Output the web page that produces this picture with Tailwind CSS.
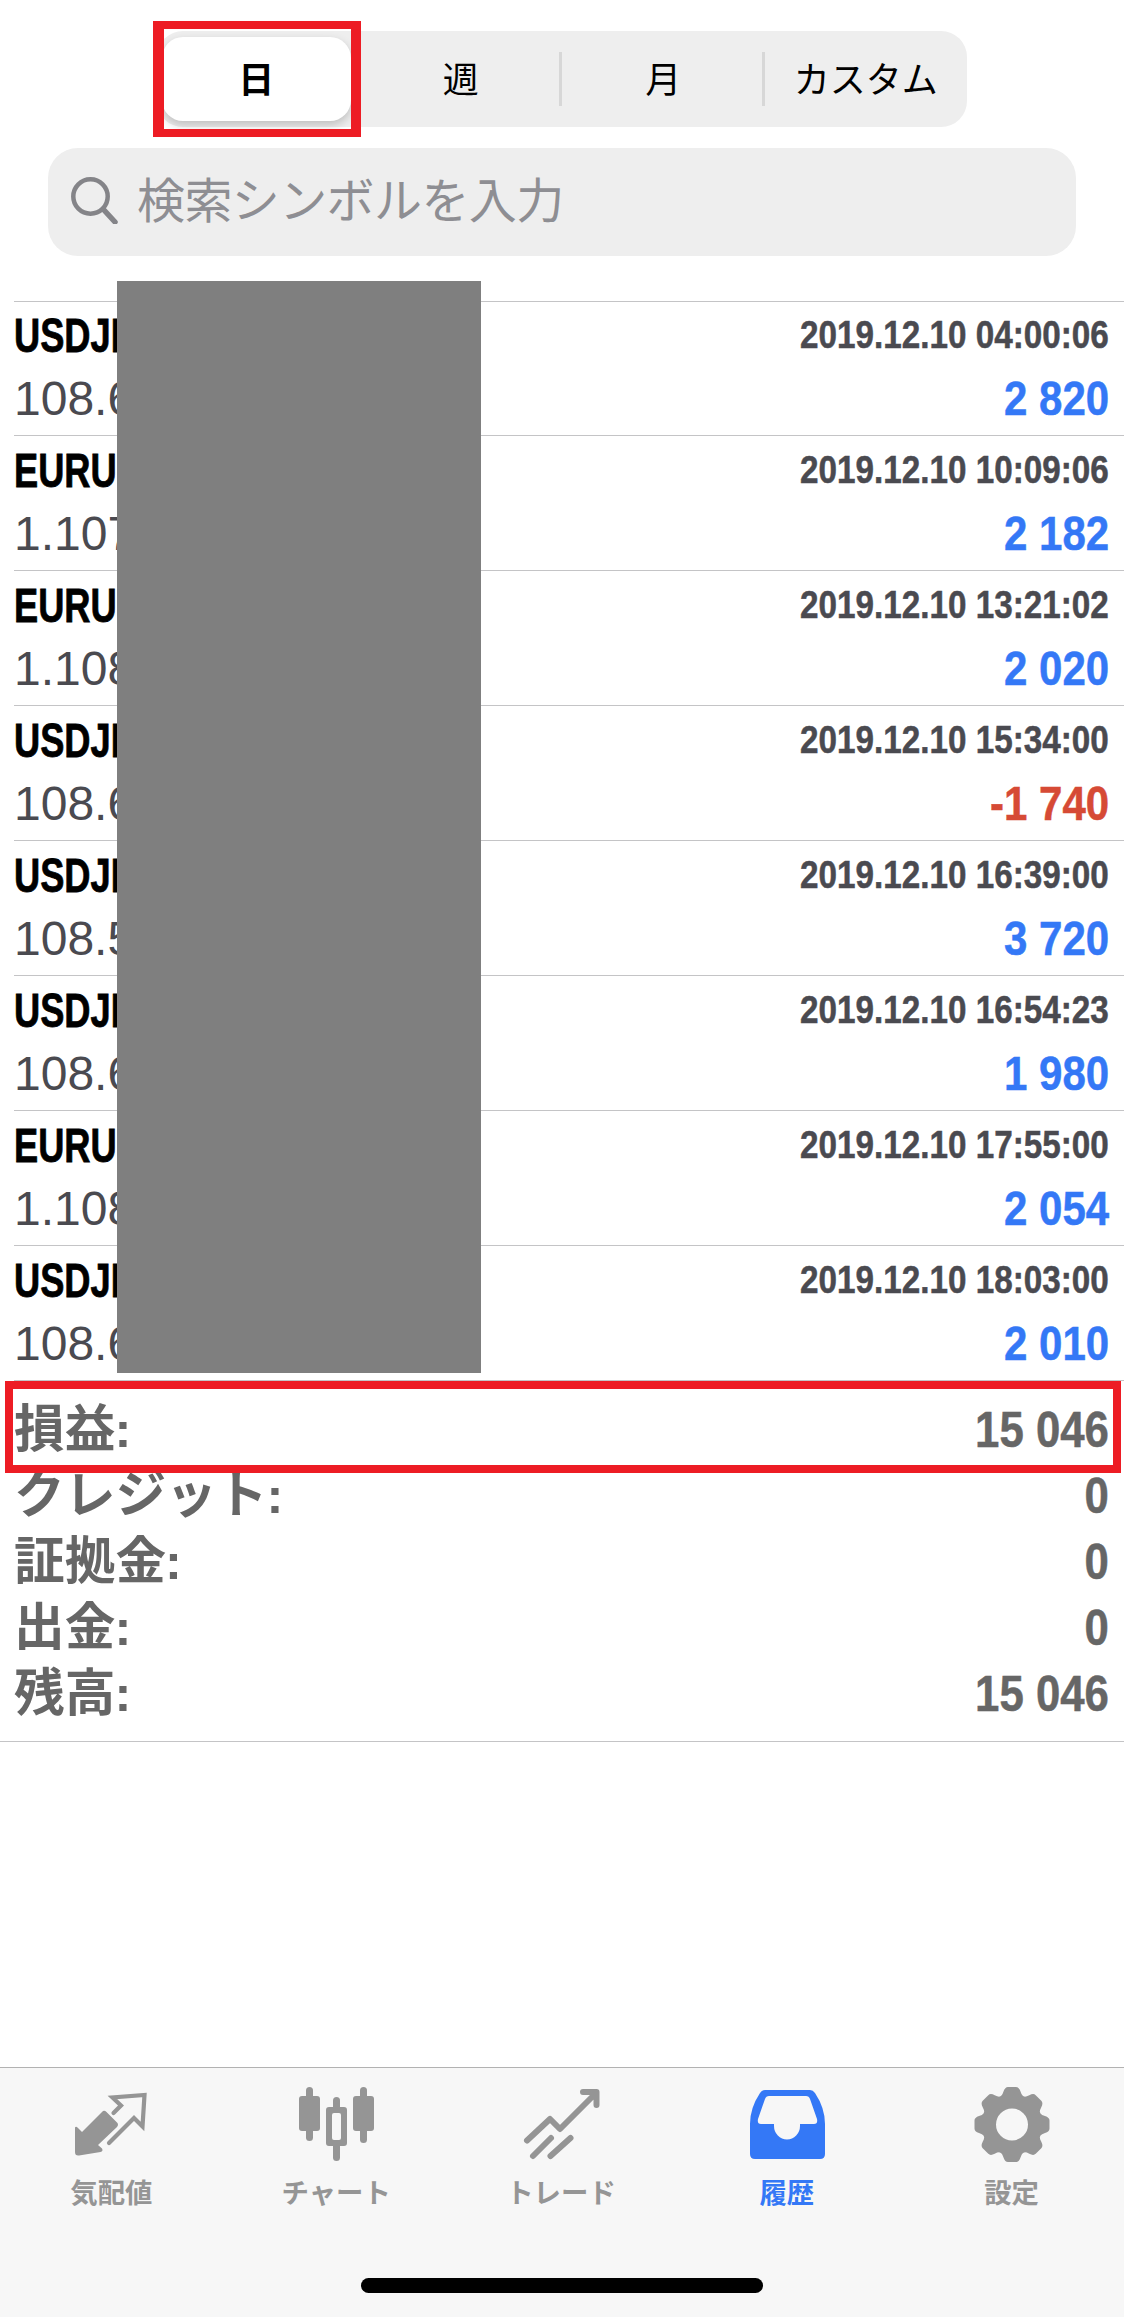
<!DOCTYPE html>
<html lang="ja"><head><meta charset="utf-8"><title>履歴</title>
<script src="https://cdn.jsdelivr.net/npm/@tailwindcss/browser@4"></script></head>
<body class="bg-white">
<div class="relative flex flex-col w-[1124px] h-[2317px] overflow-hidden bg-white font-['Liberation_Sans','Noto_Sans_CJK_JP',sans-serif]">
<div class="mt-[31px] mx-auto w-[810px] h-24 rounded-[26px] bg-[#eeeeee] grid grid-cols-4 items-center text-center text-[36px] leading-[50px] font-['Noto_Sans_CJK_JP',sans-serif] text-black shrink-0">
<div class="h-[84px] ml-[5px] mr-[9px] rounded-[21px] bg-white shadow-[0_4px_10px_rgba(0,0,0,0.2)] flex items-center justify-center font-bold"><span class="pb-[4px]">日</span></div>
<div class="h-[54px] pl-[3px] border-r-3 border-[#d7d7d7]">週</div>
<div class="h-[54px] pl-[3px] border-r-3 border-[#d7d7d7]">月</div>
<div class="h-[54px]">カスタム</div>
</div>
<div class="mt-[21px] mx-auto w-[1028px] h-[108px] rounded-[30px] bg-[#eeeeee] flex items-center shrink-0 pl-[22px]">
<svg class="w-12 h-12 mb-[4px]" viewBox="0 0 48 48" fill="none" stroke="#848488" stroke-linecap="round"><circle cx="20.500" cy="20.500" r="17.200" stroke-width="4.500"/><path d="M33.500 33.500L45 46" stroke-width="5.500"/></svg>
<span class="ml-[19px] text-[48px] leading-[60px] pb-[10px] text-[#8e8e93] font-['Noto_Sans_CJK_JP',sans-serif] font-normal -tracking-[0.6px]">検索シンボルを入力</span>
</div>
<main id="rows" class="mt-[45px] ml-[14px] border-t border-[#c4c4c6] shrink-0"></main>
<section id="totals" class="h-[361px] pt-[16px] border-b border-[#c4c4c6] pl-[14px] pr-[15px] shrink-0"></section>
<nav class="mt-auto h-[250px] border-t border-[#b2b2b2] bg-[#f7f7f7] flex flex-col items-center shrink-0">
<div class="grid grid-cols-5 w-full text-center text-[27.400px] leading-9 font-bold text-[#959595] font-['Noto_Sans_CJK_JP',sans-serif]">
<div class="flex flex-col items-center pt-[14px]"><svg class="w-20 h-20 mb-[11px]" viewBox="0 0 80 80" fill="currentColor"><path d="M3 45.500Q4 44 6 46L10 50L30 30Q32 27.500 34.500 30L45 40.500Q47 42.500 45 45L26 63L30 66.500Q31.500 69 28.500 70L7 73.500Q3 74 3 70Z"/><path d="M41.500 31L49 23.500L40.500 15.500L72.500 13L70.500 44.500L62 36L37 61" fill="none" stroke="currentColor" stroke-width="4.200" stroke-linecap="round"/></svg><span class="pr-[2px]">気配値</span></div>
<div class="flex flex-col items-center pt-[14px]"><svg class="w-20 h-20 mb-[11px]" viewBox="1 0 80 80" fill="currentColor"><rect x="3" y="14" width="21" height="35" rx="3"/><rect x="10" y="5" width="7" height="54" rx="3.500"/><rect x="57" y="14" width="21" height="35" rx="3"/><rect x="64" y="5" width="7" height="56" rx="3.500"/><rect x="37" y="15" width="7" height="16" rx="3.500"/><rect x="37" y="58" width="7" height="21" rx="3.500"/><path fill-rule="evenodd" d="M33 25H48Q51 25 51 28V61Q51 64 48 64H33Q30 64 30 61V28Q30 25 33 25ZM38 31Q36 31 36 33V56Q36 58 38 58H43Q45 58 45 56V33Q45 31 43 31Z"/></svg><span class="pr-[2px]">チャート</span></div>
<div class="flex flex-col items-center pt-[14px]"><svg class="w-20 h-20 mb-[11px]" viewBox="0 0 80 80" fill="none" stroke="currentColor" stroke-width="6" stroke-linecap="round" stroke-linejoin="round"><path d="M5 58.500L28 37L38 47L74 11M61 10H74.500V23"/><path d="M11 74L29 56M28.500 74L48.500 56"/></svg><span class="pr-[2px]">トレード</span></div>
<div class="flex flex-col items-center pt-[14px] text-[#3478f6]"><svg class="w-20 h-20 mb-[11px]" viewBox="0 0 80 80" fill="currentColor"><path fill-rule="evenodd" d="M18 8H63Q66 8 68 11Q78 26 78 42V72Q78 77 73 77H8Q3 77 3 72V42Q3 26 13 11Q15 8 18 8ZM22 14Q19 14 18 17L11 37Q10 42 14 42H27V44A13 13.500 0 0 0 53 44V42H67Q71 42 70 37L63 17Q62 14 59 14Z"/></svg>履歴</div>
<div class="flex flex-col items-center pt-[14px]"><svg class="w-20 h-20 mb-[11px]" viewBox="0 0 80 80" fill="currentColor"><path id="gear" fill-rule="evenodd"/></svg>設定</div>
</div>
<div class="mt-auto mb-6 w-[402px] h-[15px] rounded-full bg-black"></div>
</nav>
<div class="absolute left-[117px] top-[281px] w-[364px] h-[1092px] bg-[#7f7f7f]"></div>
<div class="absolute left-[153px] top-[21px] w-[208px] h-[116px] border-y-8 border-l-11 border-r-10 border-[#ed1c24]"></div>
<div class="absolute left-[5px] top-[1381px] w-[1116px] h-[92px] border-8 border-[#ed1c24]"></div>
</div>
<script>
const D=[['USDJP','108.6','04:00:06','2 820'],['EURU','1.107','10:09:06','2 182'],['EURU','1.108','13:21:02','2 020'],['USDJP','108.6','15:34:00','-1 740'],['USDJP','108.5','16:39:00','3 720'],['USDJP','108.6','16:54:23','1 980'],['EURU','1.108','17:55:00','2 054'],['USDJP','108.6','18:03:00','2 010']];
document.getElementById('rows').innerHTML=D.map((r,i)=>`<div class="${i?'h-[135px]':'h-[134px]'} border-b border-[#c4c4c6] pr-[15px] flex flex-col justify-end pb-[5px]">
<div class="flex justify-between items-baseline h-[63px] leading-[63px]"><span class="text-[48px] font-bold origin-left scale-x-[0.755] text-black whitespace-nowrap [-webkit-text-stroke:0.8px]">${r[0]}</span><span class="relative -top-[4px] text-[38px] font-bold origin-right scale-x-[0.875] text-[#4a4a50] [-webkit-text-stroke:0.5px]">2019.12.10 ${r[2]}</span></div>
<div class="flex justify-between items-baseline h-[63px] leading-[63px]"><span class="text-[48px] text-[#4a4a50]">${r[1]}</span><span class="text-[48px] font-bold origin-right scale-x-[0.875] [-webkit-text-stroke:0.5px] ${r[3][0]=='-'?'text-[#d64a35]':'text-[#3478f6]'}">${r[3]}</span></div></div>`).join('');
document.getElementById('totals').innerHTML=[['損益','15 046'],['クレジット','0'],['証拠金','0'],['出金','0'],['残高','15 046']].map(r=>`<div class="h-[66px] flex justify-between items-center text-[50px] leading-[66px] font-bold text-[#666666]"><span class="text-[50.700px]">${r[0]}<span class="-ml-[1px]">:</span></span><span class="origin-right scale-x-[0.875] [-webkit-text-stroke:0.5px]">${r[1]}</span></div>`).join('');
let p='';for(let k=0;k<8;k++){const a=k*Math.PI/4,f=(x,y)=>(40+x*Math.cos(a)-y*Math.sin(a)).toFixed(1)+' '+(42.5+x*Math.sin(a)+y*Math.cos(a)).toFixed(1);
p+=(k?'L':'M')+f(-11,-28.5)+'Q'+f(-9.5,-29.500)+' '+f(-8.500,-33)+'Q'+f(-7,-37.500)+' '+f(-4,-37.500)+'L'+f(4,-37.500)+'Q'+f(7,-37.500)+' '+f(8.500,-33)+'Q'+f(9.5,-29.500)+' '+f(11,-28.5);}
document.getElementById('gear').setAttribute('d',p+'Z M56 42.500A16 16 0 1 0 24 42.500A16 16 0 1 0 56 42.500Z');
</script>
</body></html>
